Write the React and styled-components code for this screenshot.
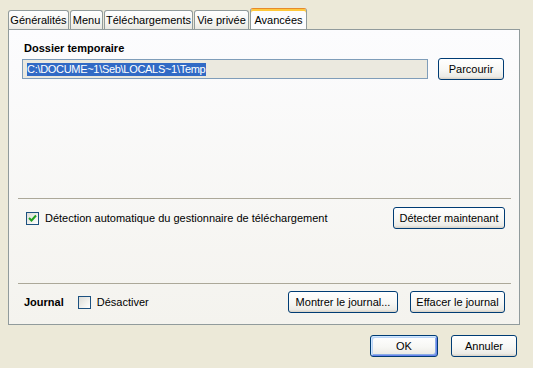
import React from 'react';
import styled, { createGlobalStyle } from 'styled-components';

const GlobalStyle = createGlobalStyle`
  html, body {
    margin: 0;
    padding: 0;
    background: #ece9d8;
  }
  body {
    font-family: "Liberation Sans", Arial, sans-serif;
    font-size: 11px;
    color: #000;
  }
`;

const Dialog = styled.div`
  width: 533px;
  height: 368px;
  box-sizing: border-box;
  padding: 8px 13px 0 8px;
  display: flex;
  flex-direction: column;
`;

const TabBar = styled.div`
  display: flex;
  align-items: flex-end;
  gap: 1px;
  height: 21px;
`;

const Tab = styled.div`
  box-sizing: border-box;
  width: ${(p) => p.$width}px;
  height: ${(p) => (p.$active ? 21 : 19)}px;
  display: flex;
  align-items: center;
  justify-content: center;
  border: 1px solid #919b9c;
  border-bottom: none;
  border-radius: 3px 3px 0 0;
  background: ${(p) =>
    p.$active
      ? '#fcfcfe'
      : 'linear-gradient(180deg, #ffffff 0%, #f3f3ef 70%, #e9e8e1 100%)'};
  border-top-color: ${(p) => (p.$active ? '#e68b2c' : '#919b9c')};
  box-shadow: ${(p) => (p.$active ? 'inset 0 2px 0 #ffc83c' : 'none')};
  padding-top: ${(p) => (p.$active ? 1 : 0)}px;
  white-space: nowrap;
`;

const Panel = styled.div`
  box-sizing: border-box;
  width: 512px;
  height: 296px;
  border: 1px solid #919b9c;
  background: linear-gradient(180deg, #fcfcfe 0%, #f4f3ee 100%);
  display: flex;
  flex-direction: column;
`;

const FolderSection = styled.div`
  flex: 1;
  padding: 11px 15px 0 13px;
`;

const Title = styled.div`
  font-weight: bold;
  line-height: 14px;
  padding-left: ${(p) => p.$indent || 0}px;
`;

const PathRow = styled.div`
  display: flex;
  align-items: center;
  gap: 10px;
  margin-top: 3px;
`;

const PathField = styled.div`
  box-sizing: border-box;
  width: 406px;
  height: 20px;
  border: 1px solid #7f9db9;
  background: #ebe9df;
  padding: 0 4px;
  display: flex;
  align-items: center;
`;

const Selected = styled.span`
  background: #316ac5;
  color: #fff;
  line-height: 13px;
  letter-spacing: -0.3px;
  padding-right: 1px;
`;

const Separator = styled.div`
  height: 0;
  border-top: 1px solid #aca899;
  margin: 0 8px 0 9px;
`;

const DetectRow = styled.div`
  height: 84px;
  box-sizing: border-box;
  padding: 8px 14px 0 17px;
  display: flex;
  align-items: flex-start;
  justify-content: space-between;
`;

const CheckLabel = styled.label`
  display: flex;
  align-items: center;
  gap: ${(p) => p.$gap || 6}px;
  height: 22px;
`;

const Box = styled.span`
  box-sizing: border-box;
  width: 13px;
  height: 13px;
  border: 1px solid #1c5180;
  background: linear-gradient(135deg, #dcdcd7 0%, #f5f5f2 70%, #ffffff 100%);
  display: flex;
  align-items: center;
  justify-content: center;
`;

const JournalRow = styled.div`
  flex: 0 0 auto;
  padding: 7px 14px 11px 15px;
  display: flex;
  align-items: center;
`;

const JournalLeft = styled.div`
  display: flex;
  align-items: center;
  gap: 14px;
  flex: 1;
`;

const ButtonGroup = styled.div`
  display: flex;
  gap: ${(p) => p.$gap}px;
`;

const Button = styled.button`
  box-sizing: border-box;
  width: ${(p) => p.$width}px;
  height: 22px;
  padding: 0;
  font: inherit;
  color: #000;
  border: 1px solid #003c74;
  border-radius: 3px;
  background: linear-gradient(180deg, #ffffff 0%, #f7f7f4 55%, #ecebe6 88%, #d6d0c5 100%);
  box-shadow: ${(p) =>
    p.$default
      ? 'inset 1px 1px 0 #cee7ff, inset -1px -1px 0 #6982ee, inset 2px 2px 0 #bcd4f6, inset -2px -2px 0 #89ade4'
      : 'none'};
`;

const Footer = styled.div`
  display: flex;
  justify-content: flex-end;
  gap: 13px;
  margin-top: 10px;
  padding-right: 3px;
`;

const Check = () => (
  <svg width="9" height="9" viewBox="0 0 9 9">
    <path d="M1 4 L3.5 6.5 L8 1.5" fill="none" stroke="#21a121" strokeWidth="2" />
  </svg>
);

const Checkbox = ({ checked, children, gap }) => (
  <CheckLabel $gap={gap}>
    <Box>{checked && <Check />}</Box>
    <span>{children}</span>
  </CheckLabel>
);

const tabs = [
  { label: 'Généralités', width: 61 },
  { label: 'Menu', width: 33 },
  { label: 'Téléchargements', width: 89 },
  { label: 'Vie privée', width: 55 },
  { label: 'Avancées', width: 57, active: true },
];

export default function App() {
  return (
    <>
      <GlobalStyle />
      <Dialog>
        <TabBar>
          {tabs.map((t) => (
            <Tab key={t.label} $width={t.width} $active={t.active}>
              {t.label}
            </Tab>
          ))}
        </TabBar>
        <Panel>
          <FolderSection>
            <Title $indent={2}>Dossier temporaire</Title>
            <PathRow>
              <PathField>
                <Selected>C:\DOCUME~1\Seb\LOCALS~1\Temp</Selected>
              </PathField>
              <Button $width={66}>Parcourir</Button>
            </PathRow>
          </FolderSection>
          <Separator />
          <DetectRow>
            <Checkbox checked>Détection automatique du gestionnaire de téléchargement</Checkbox>
            <Button $width={112}>Détecter maintenant</Button>
          </DetectRow>
          <Separator />
          <JournalRow>
            <JournalLeft>
              <Title>Journal</Title>
              <Checkbox>Désactiver</Checkbox>
            </JournalLeft>
            <ButtonGroup $gap={12}>
              <Button $width={110}>Montrer le journal...</Button>
              <Button $width={95}>Effacer le journal</Button>
            </ButtonGroup>
          </JournalRow>
        </Panel>
        <Footer>
          <Button $width={68} $default>OK</Button>
          <Button $width={66}>Annuler</Button>
        </Footer>
      </Dialog>
    </>
  );
}
